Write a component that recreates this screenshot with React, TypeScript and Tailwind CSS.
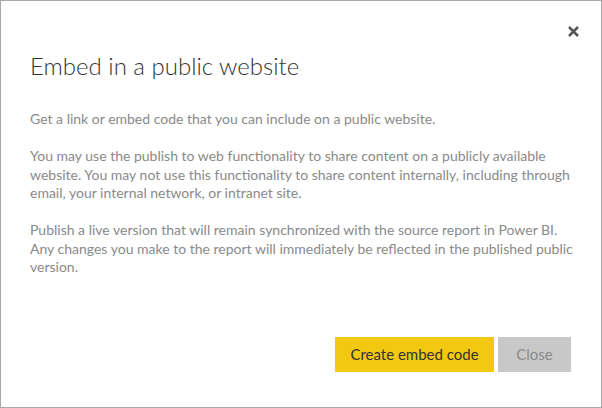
export default function App() {
  return (
    <div className="w-[602px] h-[408px] bg-white border border-[#a8a8a8] flex flex-col font-['Lato',sans-serif]">
      <div className="flex justify-end pt-[24px] pr-[22px]">
        <button className="w-[12px] h-[12px] flex items-center justify-center">
          <svg width="11" height="11" viewBox="0 0 11 11">
            <path d="M1 1 L10 10 M10 1 L1 10" stroke="#555" strokeWidth="2.5" />
          </svg>
        </button>
      </div>
      <h1 className="pl-[29px] mt-[13px] text-[24px] leading-[32px] font-light text-[#333]">
        Embed in a public website
      </h1>
      <div className="px-[29px] mt-[28px] text-[14px] leading-[18.5px] text-[#8a8a8a] flex flex-col gap-[18.5px] whitespace-nowrap">
        <p>Get a link or embed code that you can include on a public website.</p>
        <p>
          You may use the publish to web functionality to share content on a publicly available
          <br />
          website. You may not use this functionality to share content internally, including through
          <br />
          email, your internal network, or intranet site.
        </p>
        <p>
          Publish a live version that will remain synchronized with the source report in Power BI.
          <br />
          Any changes you make to the report will immediately be reflected in the published public
          <br />
          version.
        </p>
      </div>
      <div className="mt-auto flex justify-end gap-[4px] pr-[30px] pb-[35px]">
        <button className="w-[159px] h-[35px] bg-[#f2c811] text-[#333] text-[15px]">
          Create embed code
        </button>
        <button className="w-[73px] h-[35px] bg-[#c8c8c8] text-[#8a8a8a] text-[15px]">
          Close
        </button>
      </div>
    </div>
  );
}
